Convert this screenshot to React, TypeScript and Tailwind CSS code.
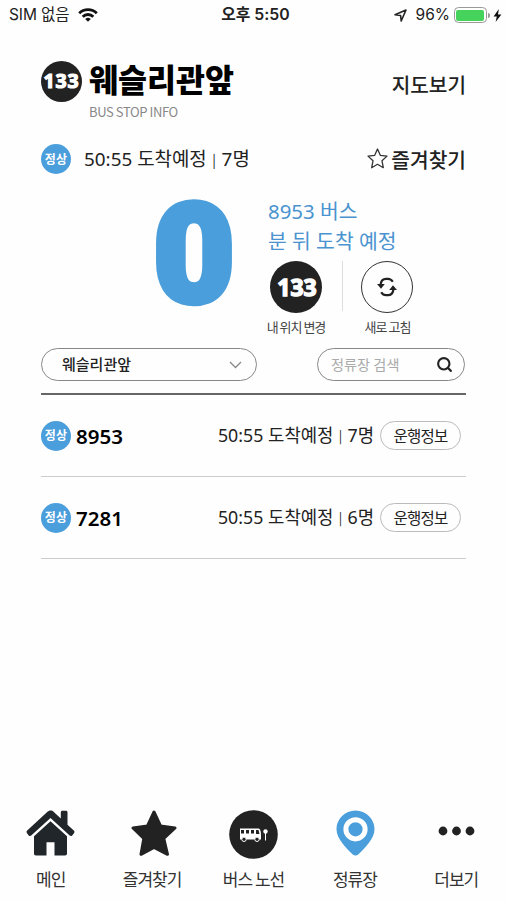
import React from "react";
import { FiSearch } from "react-icons/fi";

interface BusRow {
  line: string;
  time: string;
  people: number;
}

interface NavItem {
  label: string;
  icon: React.ReactNode;
}

const buses: BusRow[] = [
  { line: "8953", time: "50:55", people: 7 },
  { line: "7281", time: "50:55", people: 6 },
];

const StatusBar = () => (
  <div className="grid h-[30px] grid-cols-3 items-center pr-[5px] pl-[9px] font-['Inter','Noto_Sans_CJK_KR',sans-serif] text-[15px] text-[#222]">
    <div className="flex items-center gap-[9px]">
      <span className="text-[15.5px] whitespace-nowrap tracking-[-0.1px]">SIM 없음</span>
      <svg width="20" height="14" viewBox="0 0 20 14" fill="none" stroke="#111" strokeWidth="2.8">
        <path d="M1.2 5.2a12.5 12.5 0 0 1 17.6 0" />
        <path d="M4.7 8.7a7.5 7.5 0 0 1 10.6 0" />
        <path d="M10 13.8 7.2 11a4 4 0 0 1 5.6 0z" fill="#111" stroke="none" />
      </svg>
    </div>
    <span className="text-center text-[15.8px] font-semibold whitespace-nowrap">오후 5:50</span>
    <div className="flex items-center justify-end">
      <svg width="13" height="13" viewBox="0 0 13 13" fill="none" stroke="#222" strokeWidth="1.6" strokeLinejoin="round">
        <path d="M1 5.8 12 1 7.2 12 6.6 6.5z" />
      </svg>
      <span className="ml-[9px] text-[15.5px]">96%</span>
      <div className="ml-[4px] h-[16px] w-[33px] rounded-[4.5px] border border-[#999] p-[1.5px]">
        <div className="h-full w-full rounded-[2px] bg-[#45d35c]" />
      </div>
      <div className="ml-px h-[5px] w-[2px] rounded-r-full bg-[#999]" />
      <svg className="ml-[3px]" width="9" height="13" viewBox="0 0 9 13" fill="#111">
        <path d="M5.8 0 .6 7.4h3.2L2.6 13 8.4 5.4H5z" />
      </svg>
    </div>
  </div>
);

const Badge = () => (
  <span className="flex size-[30px] shrink-0 items-center justify-center rounded-full bg-[#4a9edb] pb-px text-[12px] font-bold tracking-[0.3px] text-white">
    정상
  </span>
);

const Arrival: React.FC<{ time: string; people: number }> = ({ time, people }) => (
  <>
    {time} 도착예정 <span className="mx-[0.05em] align-[0.1em] font-['Noto_Sans_CJK_KR',sans-serif] text-[0.72em]">|</span> {people}명
  </>
);

const Header = () => (
  <header className="flex h-[62px] justify-between">
    <div className="flex">
      <div className="mt-px flex size-[41px] items-center justify-center rounded-full bg-[#222] pb-px font-['Noto_Sans',sans-serif] text-[19.5px] font-bold tracking-[0.9px] text-white [-webkit-text-stroke:1.2px_white] [stroke-linejoin:round]">
        133
      </div>
      <div className="ml-[7px]">
        <h1 className="h-[43px] text-[31.5px] leading-[37px] font-black text-black">웨슬리관앞</h1>
        <p className="text-[13px] leading-[17px] tracking-[-0.4px] whitespace-nowrap text-[#888]">BUS STOP INFO</p>
      </div>
    </div>
    <button className="mt-[9px] h-[30px] text-[20.2px] leading-[29px] font-medium text-[#222]">지도보기</button>
  </header>
);

const NextBus = () => (
  <section className="flex h-[143px]">
    <div className="ml-[112px] flex w-[82px] scale-x-[1.02] justify-center pt-[3px] font-['Roboto',sans-serif] text-[137px] leading-[112px] font-black text-[#4a9edb] [-webkit-text-stroke:6.5px_#4a9edb] [stroke-linejoin:round]">
      0
    </div>
    <div className="ml-[32px]">
      <div className="pl-px font-['Noto_Sans','Noto_Sans_CJK_KR',sans-serif] text-[20.4px] leading-[30px] whitespace-nowrap text-[#4a93cf]">
        <p>8953 버스</p>
        <p>분 뒤 도착 예정</p>
      </div>
      <div className="mt-[5px] flex">
        <button className="flex w-[58px] flex-col items-center">
          <span className="flex size-[52px] items-center justify-center rounded-full bg-[#222] pl-[2px] font-['Noto_Sans',sans-serif] text-[23px] font-bold text-white [-webkit-text-stroke:1.4px_white] [stroke-linejoin:round]">
            133
          </span>
          <span className="mt-[4px] text-[13px] leading-[20px] tracking-[-1px] whitespace-nowrap text-[#444]">내 위치 변경</span>
        </button>
        <div className="ml-[17px] h-[50px] w-px bg-[#ddd]" />
        <button className="ml-[16px] flex w-[56px] flex-col items-center">
          <span className="flex size-[52px] items-center justify-center rounded-full border-[1.5px] border-[#333]">
            <svg width="20" height="20" viewBox="0 0 20 20" fill="none" stroke="#222" strokeWidth="2.2">
              <path d="M3.8 8V6.500Q4.500 2 9 1.800h2q3 0 4.800 3" />
              <path d="M16.200 12v1.500q-.700 4.500-5.200 4.700H9q-3 0-4.800-3" />
              <path d="M0 7h7.800L4 11.800zM20 13h-7.800L16 8.200z" fill="#222" stroke="none" />
            </svg>
          </span>
          <span className="mt-[4px] pl-px text-[13px] leading-[20px] tracking-[-1px] whitespace-nowrap text-[#444]">새로 고침</span>
        </button>
      </div>
    </div>
  </section>
);

const SearchRow = () => (
  <div className="flex justify-between pr-px">
    <button className="flex h-[33px] w-[216px] items-center justify-between rounded-full border border-[#888] pr-[14px] pl-[20px] text-[15px] font-medium text-[#222]">
      웨슬리관앞
      <svg width="13" height="8" viewBox="0 0 13 8" fill="none" stroke="#888" strokeWidth="1.3">
        <path d="m1 1 5.5 5.5L12 1" />
      </svg>
    </button>
    <div className="flex h-[33px] w-[148px] items-center justify-between rounded-full border border-[#888] pr-[11px] pl-[13px] text-[14.2px] text-[#aaa]">
      정류장 검색
      <FiSearch size={17} color="#222" strokeWidth={3} />
    </div>
  </div>
);

const BusItem: React.FC<BusRow> = ({ line, time, people }) => (
  <li className="flex h-[82px] items-center border-b border-[#ccc] pr-[5px]">
    <Badge />
    <span className="ml-[5px] flex-1 font-['Noto_Sans',sans-serif] text-[20.5px] leading-[30px] font-semibold text-black">{line}</span>
    <span className="font-['Noto_Sans','Noto_Sans_CJK_KR',sans-serif] text-[17.8px] leading-[26px] text-[#222]">
      <Arrival time={time} people={people} />
    </span>
    <button className="ml-[6px] h-[29px] w-[81px] rounded-full border border-[#bbb] text-[15.5px] leading-[25px] tracking-[-0.8px] text-[#222]">
      운행정보
    </button>
  </li>
);

const navItems: NavItem[] = [
  {
    label: "메인",
    icon: (
      <svg width="49" height="46" viewBox="0 0 49 46" fill="#20262a">
        <path d="M24.5.5c1.3 0 2.4.5 3.3 1.4l7 6.5V2.2c0-.9.6-1.5 1.5-1.5H40c.9 0 1.5.6 1.5 1.5v12.5l6.3 5.9c.8.8.9 1.7.2 2.6l-1.8 2.2c-.7.8-1.7.9-2.5.2L24.5 8 5.2 25.6c-.8.7-1.8.6-2.5-.2L1 23.2c-.7-.9-.6-1.8.2-2.6L21.2 2c.9-.9 2-1.5 3.3-1.5z" />
        <path d="M24.5 11.2 41 26.3v17.2c0 1.2-.7 2-2 2H28.5V32.3h-8v13.2H10c-1.3 0-2-.8-2-2V26.3z" />
      </svg>
    ),
  },
  {
    label: "즐겨찾기",
    icon: (
      <svg width="46" height="46" viewBox="0 0 46 46" fill="#222" stroke="#222" strokeWidth="3" strokeLinejoin="round" className="ml-[4px]">
        <path d="m23 2 6.5 14L44 18 32.8 28.5 36.5 44.3 23 37.5 10 44.3 12.8 28.5 2 18l14.5-2z" />
      </svg>
    ),
  },
  {
    label: "버스 노선",
    icon: (
      <svg width="49" height="49" viewBox="0 0 49 49" fill="none" className="ml-px">
        <circle cx="24.5" cy="24.5" r="24.3" fill="#222" />
        <path d="M11 18.5h18.5c1.7 0 2.5 3 2.5 7v4H11z" fill="#fff" />
        <path d="M12 20h3v3.5h-3zM17 20h3v3.5h-3zM22 20h3v3.5h-3zM27 20h2.5l1 4H27z" fill="#222" />
        <circle cx="15" cy="29.3" r="2.2" fill="#222" stroke="#fff" />
        <circle cx="28" cy="29.3" r="2.2" fill="#222" stroke="#fff" />
        <circle cx="36.5" cy="21.5" r="2.2" fill="#fff" />
        <path d="M36.5 22v8.5" stroke="#fff" />
      </svg>
    ),
  },
  {
    label: "정류장",
    icon: (
      <svg width="39" height="46" viewBox="0 0 39 46" className="ml-[2px]">
        <path d="M19.5 .5C30 .5 38.5 9 38.5 19c0 10-9.5 18.5-16 25.3-1.7 1.7-4.3 1.7-6 0C10 37.5 .5 29 .5 19 .5 9 9 .5 19.5 .5z" fill="#4a9edb" />
        <circle cx="19.5" cy="19.3" r="9.6" fill="#4a9edb" stroke="#fff" strokeWidth="5" />
      </svg>
    ),
  },
  {
    label: "더보기",
    icon: (
      <svg width="37" height="42" viewBox="0 0 37 42" fill="#222" className="ml-px">
        <circle cx="5" cy="21" r="4.4" />
        <circle cx="18.5" cy="21" r="4.4" />
        <circle cx="32" cy="21" r="4.4" />
      </svg>
    ),
  },
];

const BottomNav = () => (
  <nav className="grid h-[90px] grid-cols-5">
    {navItems.map((item) => (
      <a key={item.label} className="flex flex-col items-center">
        <span className="flex h-[57px] items-start">{item.icon}</span>
        <span className="text-[17px] leading-[24px] tracking-[-1px] whitespace-nowrap text-[#333]">{item.label}</span>
      </a>
    ))}
  </nav>
);

const App: React.FC = () => {
  return (
    <div className="flex h-[900px] w-[507px] flex-col overflow-hidden bg-[#fefefe] font-['Noto_Sans_CJK_KR',sans-serif]">
      <StatusBar />
      <main className="flex-1 pt-[30px] pr-[41px] pl-[41px]">
        <Header />
        <div className="mt-[21px] flex h-[32px] items-center">
          <Badge />
          <span className="ml-[13px] flex-1 font-['Noto_Sans','Noto_Sans_CJK_KR',sans-serif] text-[18.9px] leading-[30px] text-[#222]">
            <Arrival time="50:55" people={7} />
          </span>
          <svg width="21" height="21" viewBox="0 0 21 21" fill="none" stroke="#333" strokeWidth="1.3" strokeLinejoin="round" className="mb-[2px]">
            <path d="m10.5 1 2.8 6.3 6.7.8-5 4.7 1.3 6.9-5.800-3.400-5.800 3.400L6 12.800 1 8.100l6.700-.8z" />
          </svg>
          <span className="ml-[3px] text-[20.3px] leading-[30px] font-medium text-[#222]">즐겨찾기</span>
        </div>
        <div className="mt-[21px]">
          <NextBus />
        </div>
        <div className="mt-[9px]">
          <SearchRow />
        </div>
        <ul className="mt-[12px] border-t-2 border-[#666]">
          {buses.map((bus) => (
            <BusItem key={bus.line} {...bus} />
          ))}
        </ul>
      </main>
      <BottomNav />
    </div>
  );
};

export default App;
